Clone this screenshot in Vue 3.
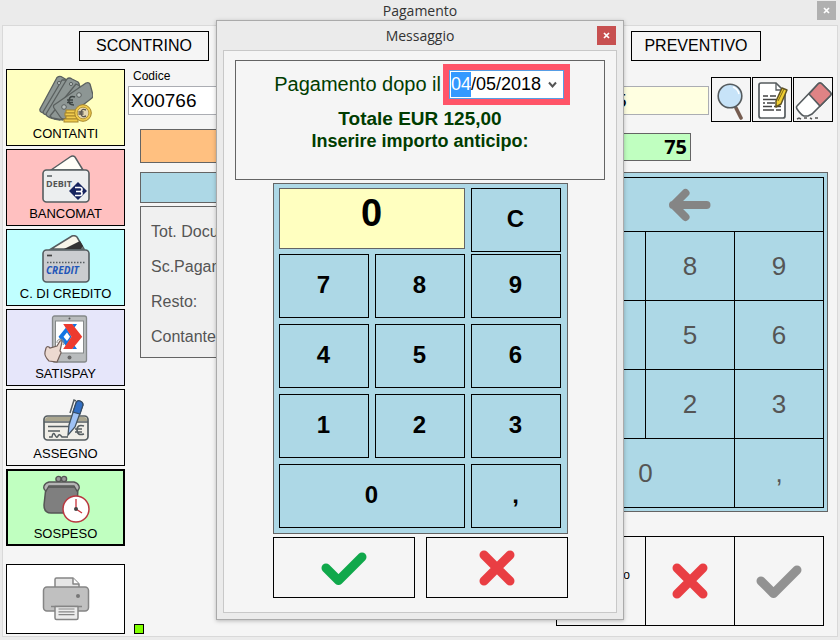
<script setup>
import { ref } from 'vue'

const methods = [
  { id: 'cash', label: 'CONTANTI', tone: 'yellow' },
  { id: 'debit', label: 'BANCOMAT', tone: 'pink' },
  { id: 'credit', label: 'C. DI CREDITO', tone: 'cyan' },
  { id: 'satispay', label: 'SATISPAY', tone: 'lavender' },
  { id: 'cheque', label: 'ASSEGNO', tone: 'plain' },
  { id: 'pending', label: 'SOSPESO', tone: 'green' },
]
const selected = ref('pending')
const totals = ['Tot. Documento:', 'Sc.Pagamento:', 'Resto:', 'Contante:']
const digits = ['7', '8', '9', '4', '5', '6', '1', '2', '3']

const code = ref('X00766')
const detail = ref('5')
const day = ref('04')
const month = ref('05')
const year = ref('2018')
const amount = ref('0')

function press(key) {
  amount.value = amount.value === '0' && key !== ',' ? key : amount.value + key
}
function clearAmount() {
  amount.value = '0'
}
</script>

<template>
  <div class="window">
    <header class="titlebar">
      <h1 class="title">Pagamento</h1>
      <button class="close close-muted" aria-label="Chiudi finestra">
        <svg width="7" height="7" viewBox="0 0 7 7"><path d="M1 1l5 5M6 1l-5 5" stroke="#fff" stroke-width="1.7" /></svg>
      </button>
    </header>

    <main class="panel">
      <nav class="doc-types">
        <button class="doc-button">SCONTRINO</button>
        <button class="doc-button">PREVENTIVO</button>
      </nav>

      <div class="body">
        <aside class="sidebar">
          <button
            v-for="m in methods"
            :key="m.id"
            class="method"
            :class="[m.tone, { selected: selected === m.id }]"
            @click="selected = m.id"
          >
            <svg v-if="m.id === 'cash'" class="method-icon" viewBox="0 0 54 48">
              <g fill="#8d9694" stroke="#5a605f" stroke-width="1.3" stroke-linejoin="round">
                <path d="M1 34L18 2.500Q20 .8 22 1.500L28 5 14 43 2 37Q.5 36 1 34z" />
                <path d="M4 37L23 5 28 5 16 44 5 39z" />
                <path d="M7 39L28 4Q30 2 33 4L39 7Q41 9 40 12L21 45Q12 44 8 41z" />
                <path d="M11 41L37 9 41 11 24 45 13 43z" />
                <path d="M15 30L47 8Q50 7 51 9L54 20Q54 22 53 23L27 43Q24 45 22 43L15 33Q14 31 15 30z" />
              </g>
              <g fill="#b8c0be" stroke="#5a605f" stroke-width="1"><circle cx="25" cy="32" r="2.300" /><circle cx="40" cy="20" r="2.300" /><circle cx="20" cy="8" r="1.600" /><circle cx="32" cy="9" r="1.600" /></g>
              <path d="M36 22q-5-2-6 3t5 5M28 25h6M28 27.500h6" fill="none" stroke="#3d4443" stroke-width="1.500" />
              <g fill="#f0cb4d" stroke="#a5842b" stroke-width="1"><rect x="27" y="35" width="11" height="3" /><rect x="26" y="38" width="12" height="3" /><rect x="27" y="41" width="11" height="3" /><rect x="25" y="44" width="14" height="3" /><circle cx="44" cy="38" r="8.300" /></g>
              <circle cx="44" cy="38" r="5.800" fill="#e4d7b2" stroke="#b8993e" />
              <path d="M47 35q-5-2-5 3t5 3M39.500 37h5M39.500 39h5" fill="none" stroke="#5b5750" stroke-width="1.400" />
            </svg>
            <svg v-else-if="m.id === 'debit'" class="method-icon" viewBox="0 0 54 48">
              <path d="M12 15 L31 2 Q34 0 36 2 L44 15 Z" fill="#fffef8" stroke="#555d60" stroke-width="1.500" />
              <rect x="4" y="15" width="46" height="32" rx="3.500" fill="#eceeef" stroke="#555d60" stroke-width="1.600" />
              <path d="M8 21h5" stroke="#555d60" stroke-width="1.500" />
              <text x="7" y="32" class="icon-text" font-size="9" fill="#555">DEBIT</text>
              <path d="M39 27l9 9-9 9-9-9z" fill="#16245f" />
              <path d="M36 32.500h5q2 0 2 2t-2 2h-4 4q2 0 2 2t-2 2h-5" fill="none" stroke="#fff" stroke-width="1.600" />
            </svg>
            <svg v-else-if="m.id === 'credit'" class="method-icon" viewBox="0 0 54 48">
              <path d="M12 14 L33 1 Q36 0 38 2 L45 14 Z" fill="#f8f6ea" stroke="#555d60" stroke-width="1.500" />
              <path d="M25 14L41 6l3 5-2 3z" fill="#333" />
              <rect x="4" y="15" width="46" height="32" rx="3.500" fill="#cbcdd0" stroke="#555d60" stroke-width="1.600" />
              <path d="M8 20.500h5" stroke="#444" stroke-width="1.700" />
              <path d="M8 27.500h38" stroke="#555d60" stroke-width="1.400" stroke-dasharray="1.500 1.500" />
              <text x="7" y="39" class="icon-text slanted" font-size="10" fill="#2356b8">CREDIT</text>
            </svg>
            <svg v-else-if="m.id === 'satispay'" class="method-icon" viewBox="0 0 54 48">
              <rect x="13.500" y="1" width="34" height="46" rx="2" fill="#b9bcbd" stroke="#85898a" stroke-width="1.300" />
              <rect x="16.500" y="6" width="28" height="32" fill="#fff" stroke="#85898a" />
              <circle cx="30.500" cy="3.500" r="1" fill="#555" /><circle cx="30.500" cy="42.500" r="2" fill="#666" />
              <path d="M19.500 21.700L27 12.500 32.500 21.700 27 31z M33 9h5l-2.500 3.500z M33 34h5l-2.500-3.500z" fill="#1375e3" />
              <path d="M24.500 21.700L28 17.500 31 21.700 28 26z" fill="#fff" />
              <path d="M24.200 9h9l10 12.700L33.200 34h-9l8.300-12.300z" fill="#ed3b2f" />
              <path d="M10 46q-5-5-4-9l1-4q1-2 3-1l1 1 7-2 3-5q2-1 2 1l-2 9q2 1 0 4l-3 7z" fill="#ecd9d0" stroke="#725f59" stroke-width="1.200" />
              <path d="M18 28a3.500 3.500 0 1 1 6 2" fill="none" stroke="#8b8b8b" />
            </svg>
            <svg v-else-if="m.id === 'cheque'" class="method-icon" viewBox="0 0 54 48">
              <rect x="5" y="21" width="44" height="24" rx="3.500" fill="#f0eee7" stroke="#555d60" stroke-width="1.700" />
              <path d="M6 26v-1q0-3 3-3h36q3 0 3 3v1z" fill="#aaa68f" /><path d="M5 27h44" stroke="#555d60" stroke-width="1.300" />
              <path d="M9 31.500h21M9 36h12M10 42h3q1-6 3-2t3 1 4 1h6" fill="none" stroke="#555d60" stroke-width="1.500" />
              <path d="M45 31q-7-2-7 4t7 4M36 34h7M36 37h7" fill="none" stroke="#555d60" stroke-width="1.700" />
              <path d="M29 40l1-10 7-22q1-3 4-2t3 4l-8 22z" fill="#9fc2f5" stroke="#44535f" stroke-width="1.300" />
              <path d="M34 17l3-9q1-3 4-2t3 4l-3 9z" fill="#326fc4" stroke="#344c66" stroke-width="1.200" />
              <path d="M37 6l-2-1-4 13" fill="none" stroke="#555d60" stroke-width="1.500" />
            </svg>
            <svg v-else class="method-icon" viewBox="0 0 54 48">
              <circle cx="19.500" cy="4" r="2.600" fill="#999" stroke="#555" stroke-width="1.400" /><circle cx="25" cy="4" r="2.600" fill="#999" stroke="#555" stroke-width="1.400" />
              <path d="M7 12h32l-1 20q0 6-6 6H12q-7 0-7-8z" fill="#7f7f7f" stroke="#555" stroke-width="1.500" />
              <path d="M7 16q-3-2-2-5t5-4h25q4 1 5 4t-2 5l-3-5H10z" fill="#b5b5b5" stroke="#555" stroke-width="1.400" />
              <circle cx="37" cy="34" r="13" fill="#fff" stroke="#b93840" stroke-width="1.500" />
              <path d="M37 34V24M37 34l6 4" stroke="#c8323a" stroke-width="1.300" /><circle cx="37" cy="34" r="2" fill="#444" />
            </svg>
            <span>{{ m.label }}</span>
          </button>

          <button class="print" aria-label="Stampa">
            <svg width="48" height="44" viewBox="0 0 48 44">
              <g stroke="#858585" stroke-width="1.500" stroke-linejoin="round">
                <path d="M13 12V2.500q0-1.500 1.500-1.500H31l6 6v5z" fill="#e6e6e6" />
                <path d="M31 1v6h6" fill="#fff" />
                <rect x="1.500" y="10" width="45" height="24" rx="3.500" fill="#c0c0c0" />
                <path d="M9 29.500h31" />
                <path d="M13 29.500h23V41q0 1.500-1.500 1.500h-20Q13 42.500 13 41z" fill="#ececec" />
                <path d="M16.500 32h16M16.500 34.800h16M16.500 37.600h16" stroke-width="1.200" />
              </g>
              <circle cx="36" cy="19" r="2" fill="#777" />
            </svg>
          </button>
        </aside>

        <section class="content">
          <div class="fields">
            <div class="field field-code">
              <label for="code">Codice</label>
              <input id="code" v-model="code" type="text" />
            </div>
            <input v-model="detail" class="detail" type="text" aria-label="Descrizione" />
            <div class="tools">
              <button class="tool" aria-label="Cerca">
                <svg width="38" height="42" viewBox="0 0 38 42">
                  <path d="M24 29l5 10" stroke="#765c50" stroke-width="3.600" stroke-linecap="round" />
                  <path d="M22 26l2 3" stroke="#666" stroke-width="2" />
                  <circle cx="18" cy="17" r="11.800" fill="#c7e3f8" stroke="#555b5e" stroke-width="1.600" />
                  <path d="M21 8q5 2 6 7" fill="none" stroke="#fff" stroke-width="1.600" />
                </svg>
              </button>
              <button class="tool" aria-label="Note">
                <svg width="38" height="42" viewBox="0 0 38 42">
                  <path d="M8 4h15l9 9v24q0 2-2 2H8q-2 0-2-2V6q0-2 2-2z" fill="#fff" stroke="#555b5e" stroke-width="1.700" />
                  <path d="M23 4v7h7" fill="none" stroke="#555b5e" stroke-width="1.300" />
                  <path d="M10 17h5m2 0h6M10 20.500h13M10 24h2m2 0h8M10 27.500h9m2 0h7M10 31h11m2 0h5" stroke="#444" stroke-width="1.600" />
                  <path d="M23 28l0-6 6-13 5 2-6 14z" fill="#f1cf31" stroke="#605323" stroke-width="1.500" stroke-linejoin="round" />
                  <path d="M25 22l6-12" stroke="#806c1e" />
                </svg>
              </button>
              <button class="tool" aria-label="Cancella">
                <svg width="38" height="42" viewBox="0 0 38 42">
                  <path d="M3 27L24 5q2-2 4 0l8 8q2 2 0 4L18 35l-4 2h-4q-3-1-7-7-1-2 0-3z" fill="#fff" stroke="#555b5e" stroke-width="1.600" />
                  <path d="M15 15L24 5q2-2 4 0l8 8q2 2 0 4L26 27z" fill="#df8385" stroke="#555b5e" stroke-width="1.600" />
                  <path d="M3 40l2-1 2 1m3-1h3m3 0l2 1m3-1h3" fill="none" stroke="#555" stroke-width="1.500" />
                </svg>
              </button>
            </div>
          </div>

          <div class="columns">
            <div class="summary">
              <div class="bar bar-orange"></div>
              <div class="bar bar-blue"></div>
              <ul class="totals">
                <li v-for="t in totals" :key="t">{{ t }}</li>
              </ul>
            </div>

            <div class="entry">
              <output class="green-total">75</output>
              <div class="keypad">
                <div class="key-grid">
                  <button class="key wide3" aria-label="Indietro">
                    <svg width="44" height="34" viewBox="0 0 44 34"><path d="M38.500 17H5M17.500 5L5.500 17l12 12" fill="none" stroke="#858585" stroke-width="8" stroke-linecap="round" stroke-linejoin="round" /></svg>
                  </button>
                  <button v-for="d in digits" :key="d" class="key">{{ d }}</button>
                  <button class="key wide2">0</button>
                  <button class="key">,</button>
                </div>
              </div>
              <div class="actions">
                <button class="action action-text">o</button>
                <button class="action" aria-label="Annulla">
                  <svg width="38" height="38" viewBox="0 0 38 38"><path d="M6 6l26 26M32 6L6 32" stroke="#e93e43" stroke-width="9" stroke-linecap="round" /></svg>
                </button>
                <button class="action" aria-label="Conferma">
                  <svg width="48" height="38" viewBox="0 0 48 38"><path d="M6 19l12.500 12.500L42 8" fill="none" stroke="#929292" stroke-width="9" stroke-linecap="round" stroke-linejoin="round" /></svg>
                </button>
              </div>
            </div>
          </div>

          <span class="status"></span>
        </section>
      </div>
    </main>

    <div class="overlay">
      <div class="dialog" role="dialog" aria-labelledby="dialog-title">
        <header class="dialog-bar">
          <h2 id="dialog-title" class="title">Messaggio</h2>
          <button class="close" aria-label="Chiudi messaggio">
            <svg width="7" height="7" viewBox="0 0 7 7"><path d="M1 1l5 5M6 1l-5 5" stroke="#fff" stroke-width="1.700" /></svg>
          </button>
        </header>
        <div class="dialog-body">
          <div class="message">
            <div class="due">
              <label for="day">Pagamento dopo il</label>
              <div class="date-mark">
                <div class="date">
                  <input id="day" v-model="day" class="part active" maxlength="2" />
                  <span>/</span>
                  <input v-model="month" class="part" maxlength="2" aria-label="Mese" />
                  <span>/</span>
                  <input v-model="year" class="part year" maxlength="4" aria-label="Anno" />
                  <button class="drop" aria-label="Apri calendario">
                    <svg width="9" height="8" viewBox="0 0 9 8"><path d="M1 1.500l3.500 4 3.500-4" fill="none" stroke="#555" stroke-width="2" /></svg>
                  </button>
                </div>
              </div>
            </div>
            <p class="total">Totale EUR 125,00</p>
            <p class="prompt">Inserire importo anticipo:</p>
          </div>

          <div class="pad">
            <div class="pad-grid pad-top">
              <output class="display">{{ amount }}</output>
              <button class="pad-key" @click="clearAmount">C</button>
            </div>
            <div class="pad-grid">
              <button v-for="d in digits" :key="d" class="pad-key" @click="press(d)">{{ d }}</button>
              <button class="pad-key wide2" @click="press('0')">0</button>
              <button class="pad-key" @click="press(',')">,</button>
            </div>
          </div>

          <div class="choices">
            <button class="choice" aria-label="Conferma importo">
              <svg width="48" height="38" viewBox="0 0 48 38"><path d="M6 19l12.500 12.500L42 8" fill="none" stroke="#10a84b" stroke-width="9" stroke-linecap="round" stroke-linejoin="round" /></svg>
            </button>
            <button class="choice" aria-label="Annulla importo">
              <svg width="38" height="38" viewBox="0 0 38 38"><path d="M6 6l26 26M32 6L6 32" stroke="#e93e43" stroke-width="9" stroke-linecap="round" /></svg>
            </button>
          </div>
        </div>
      </div>
    </div>
  </div>
</template>

<style>
body {
  background: #ebebeb;
}
</style>

<style scoped>
* {
  box-sizing: border-box;
}
.window {
  position: relative;
  min-height: 100vh;
  padding: 0 2px 3px;
  display: flex;
  flex-direction: column;
  background: #ebebeb;
  color: #000;
  font-family: 'Liberation Sans', Arial, sans-serif;
}
button,
input {
  font-family: inherit;
  color: inherit;
  margin: 0;
  padding: 0;
  border-radius: 0;
  border: 1px solid #000;
  background: #f5f5f5;
}
svg {
  display: block;
  flex: none;
}
.titlebar {
  display: grid;
  grid-template-columns: 19px 1fr 19px;
  height: 25px;
  padding: 0 2px;
}
.title {
  grid-column: 2;
  margin: 0;
  text-align: center;
  font: 400 14px/22px 'Open Sans', sans-serif;
  color: #333;
}
.close {
  grid-column: 3;
  display: flex;
  align-items: center;
  justify-content: center;
  width: 19px;
  height: 19px;
  border: 0;
  background: #c75050;
}
.close-muted {
  margin-top: 1px;
  background: #b0b0b0;
}
.panel {
  flex: 1;
  display: flex;
  flex-direction: column;
  border: 1px solid #d9d9d9;
  background: #f5f5f5;
}
.doc-types {
  display: flex;
  justify-content: space-between;
  padding: 5px 76px 8px;
}
.doc-button {
  width: 130px;
  height: 30px;
  font-size: 16px;
}
.body {
  display: flex;
  gap: 3px;
  padding: 0 3px 2px;
}
.sidebar {
  width: 119px;
  display: flex;
  flex-direction: column;
  gap: 3px;
}
.method {
  height: 77px;
  padding-top: 5px;
  display: flex;
  flex-direction: column;
  align-items: center;
  gap: 2px;
  font-size: 13px;
  line-height: 18px;
}
.method-icon {
  width: 54px;
  height: 48px;
}
.selected {
  border-width: 2px;
  padding-top: 4px;
}
.yellow { background: #ffffc0; }
.pink { background: #ffc0c0; }
.cyan { background: #c0ffff; }
.lavender { background: #e6e6fa; }
.green { background: #c0ffc0; }
.icon-text {
  font-family: 'Open Sans', sans-serif;
  font-weight: 700;
}
.slanted {
  font-style: italic;
}
.print {
  display: flex;
  align-items: center;
  justify-content: center;
  height: 70px;
  margin-top: 15px;
  background: #fff;
}
.content {
  flex: 1;
  min-width: 0;
  display: grid;
  grid-template-rows: auto 1fr;
}
.fields {
  display: flex;
  align-items: flex-end;
  padding-bottom: 7px;
}
.field {
  display: flex;
  flex-direction: column;
  font-size: 12px;
  line-height: 14px;
}
.field-code {
  flex: 1;
  margin-right: 4px;
  margin-bottom: 7px;
  gap: 3px;
}
.field label {
  padding-left: 5px;
}
.field input,
.detail {
  width: 100%;
  height: 29px;
  padding: 0 2px;
  border-color: #abadb3;
  background: #fff;
  font-size: 19px;
}
.detail {
  width: 96px;
  margin-bottom: 7px;
  background: #ffffe1;
}
.tools {
  display: flex;
  gap: 1px;
  margin-left: 2px;
  margin-right: 1px;
}
.tool {
  display: flex;
  align-items: center;
  justify-content: center;
  width: 40px;
  height: 45px;
}
.columns {
  grid-area: 2 / 1;
  display: flex;
  justify-content: space-between;
  align-items: flex-start;
  padding-left: 12px;
  padding-right: 6px;
}
.summary {
  flex: 1;
  margin-right: 8px;
}
.bar {
  border: 1px solid #646464;
}
.bar-orange {
  height: 34px;
  background: #ffc080;
}
.bar-blue {
  height: 31px;
  margin-top: 9px;
  background: #add8e6;
}
.totals {
  margin: 3px 0 0;
  padding: 7px 10px 3px;
  border: 1px solid #646464;
  background: #f0f0f0;
  list-style: none;
  color: #555;
  font-size: 16px;
  line-height: 35px;
}
.entry {
  width: 276px;
  padding-top: 4px;
}
.green-total {
  display: block;
  width: 139px;
  height: 28px;
  padding-right: 3px;
  border: 1px solid #646464;
  background: #c0ffc0;
  text-align: right;
  font: 700 20px/26px 'Open Sans', sans-serif;
}
.keypad {
  margin-top: 11px;
  padding: 4px 3px 3px;
  border: 1px solid #646464;
  background: #add8e6;
}
.key-grid {
  display: grid;
  grid-template-columns: repeat(3, 1fr);
  grid-template-rows: 54px repeat(4, 69px);
  border: solid #000;
  border-width: 1px 0 0 1px;
}
.key {
  display: flex;
  align-items: center;
  justify-content: center;
  border-width: 0 1px 1px 0;
  background: transparent;
  color: #555;
  font-size: 26px;
}
.wide2 {
  grid-column: span 2;
}
.wide3 {
  grid-column: span 3;
}
.actions {
  display: grid;
  grid-template-columns: repeat(3, 1fr);
  height: 90px;
  margin: 24px 4px 0;
  border: 1px solid #000;
  border-right: 0;
}
.action {
  display: flex;
  align-items: center;
  justify-content: center;
  border-width: 0 1px 0 0;
}
.action-text {
  justify-content: flex-end;
  padding: 0 15px 12px 0;
  font-size: 12px;
}
.status {
  grid-area: 2 / 1;
  align-self: end;
  width: 10px;
  height: 10px;
  margin-left: 6px;
  border: 1px solid #000;
  background: #80ff00;
}
.overlay {
  position: absolute;
  inset: 0;
  display: flex;
  align-items: center;
  justify-content: center;
}
.dialog {
  width: 408px;
  padding: 0 6px 6px;
  border: 1px solid #aaa;
  background: #ebebeb;
  box-shadow: 0 1px 4px rgba(0, 0, 0, 0.25);
}
.dialog-bar {
  display: grid;
  grid-template-columns: 19px 1fr 19px;
  align-items: center;
  height: 29px;
  padding: 0 1px;
}
.dialog-body {
  display: flex;
  flex-direction: column;
  align-items: center;
  padding: 9px 11px 14px;
  border: 1px solid #c8c8c8;
  background: #f5f5f5;
}
.message {
  width: 100%;
  height: 120px;
  padding-top: 3px;
  border: 1px solid #646464;
  color: #003c00;
  text-align: center;
}
.due {
  display: flex;
  align-items: center;
  justify-content: flex-end;
  gap: 2px;
  padding-right: 34px;
  font-size: 20px;
}
.date-mark {
  padding: 6px;
  background: #ff5468;
}
.date {
  display: flex;
  align-items: center;
  width: 115px;
  height: 29px;
  padding-left: 1px;
  border: 1px solid #569de5;
  background: #fff;
  color: #000;
  font-size: 18px;
}
.part {
  width: 20px;
  height: 25px;
  border: 0;
  background: transparent;
  font-size: 18px;
}
.active {
  background: #3399ff;
  color: #fff;
}
.year {
  width: 41px;
}
.drop {
  display: flex;
  justify-content: center;
  flex: 1;
  border: 0;
  background: transparent;
}
.total,
.prompt {
  margin: 0;
  font-weight: 700;
  line-height: 22px;
}
.total {
  margin-top: 3px;
  font-size: 19px;
}
.prompt {
  font-size: 18px;
}
.pad {
  width: 295px;
  margin-top: 3px;
  padding: 4px 6px 5px 5px;
  border: 1px solid #646464;
  background: #add8e6;
}
.pad-grid {
  display: grid;
  grid-template-columns: repeat(3, 1fr);
  gap: 6px;
}
.pad-top {
  margin-bottom: 2px;
}
.pad-key {
  height: 64px;
  padding-bottom: 2px;
  background: transparent;
  font-size: 24px;
  font-weight: 700;
}
.display {
  grid-column: span 2;
  height: 61px;
  border: 1px solid #646464;
  background: #ffffc0;
  text-align: center;
  font-size: 38px;
  font-weight: 700;
  line-height: 48px;
}
.choices {
  display: flex;
  justify-content: space-between;
  width: 295px;
  margin-top: 3px;
}
.choice {
  display: flex;
  align-items: center;
  justify-content: center;
  width: 142px;
  height: 61px;
}
</style>
